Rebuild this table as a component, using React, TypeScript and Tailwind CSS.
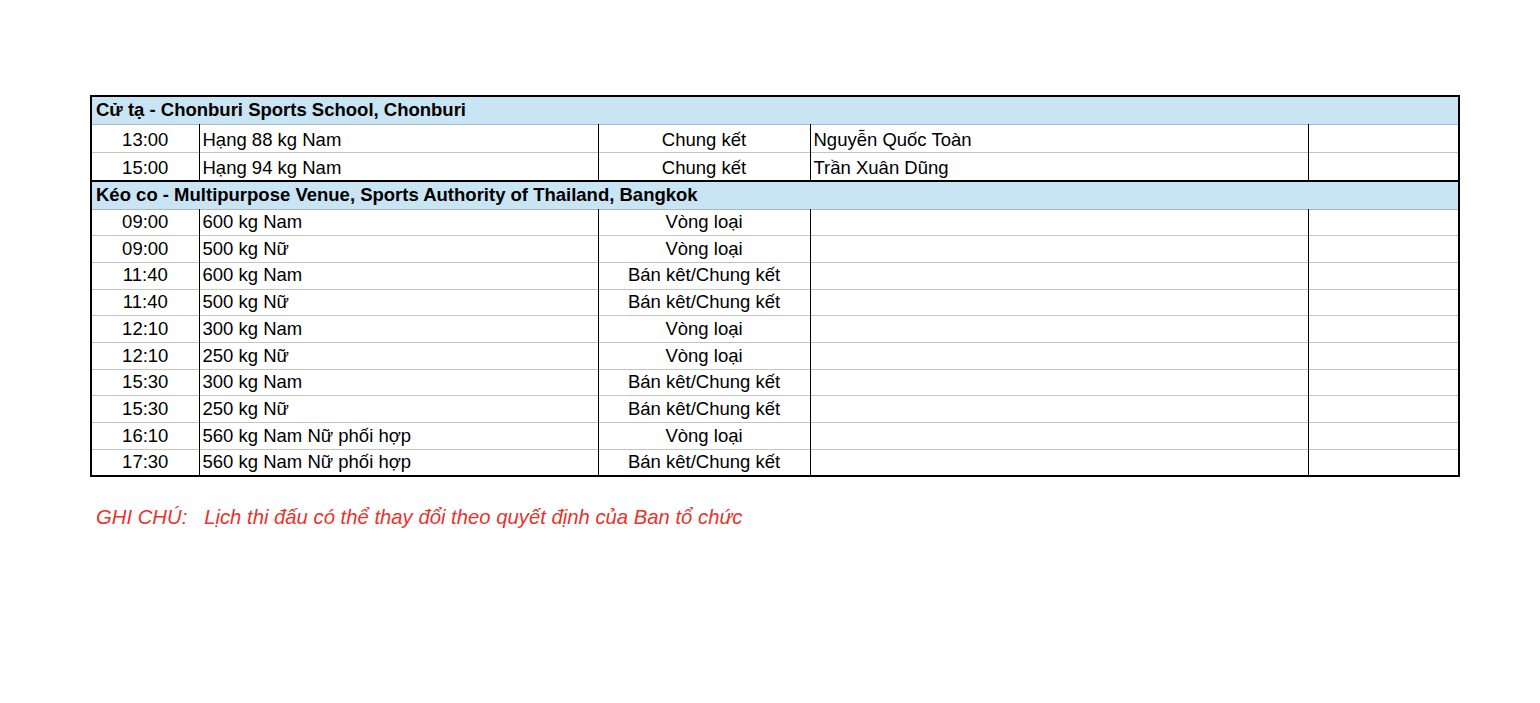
import React from 'react';

type Row = { time: string; event: string; stage: string; name?: string };
type Section = { title: string; rows: Row[] };

const sections: Section[] = [
  {
    title: 'Cử tạ - Chonburi Sports School, Chonburi',
    rows: [
      { time: '13:00', event: 'Hạng 88 kg Nam', stage: 'Chung kết', name: 'Nguyễn Quốc Toàn' },
      { time: '15:00', event: 'Hạng 94 kg Nam', stage: 'Chung kết', name: 'Trần Xuân Dũng' },
    ],
  },
  {
    title: 'Kéo co - Multipurpose Venue, Sports Authority of Thailand, Bangkok',
    rows: [
      { time: '09:00', event: '600 kg Nam', stage: 'Vòng loại' },
      { time: '09:00', event: '500 kg Nữ', stage: 'Vòng loại' },
      { time: '11:40', event: '600 kg Nam', stage: 'Bán kêt/Chung kết' },
      { time: '11:40', event: '500 kg Nữ', stage: 'Bán kêt/Chung kết' },
      { time: '12:10', event: '300 kg Nam', stage: 'Vòng loại' },
      { time: '12:10', event: '250 kg Nữ', stage: 'Vòng loại' },
      { time: '15:30', event: '300 kg Nam', stage: 'Bán kêt/Chung kết' },
      { time: '15:30', event: '250 kg Nữ', stage: 'Bán kêt/Chung kết' },
      { time: '16:10', event: '560 kg Nam Nữ phối hợp', stage: 'Vòng loại' },
      { time: '17:30', event: '560 kg Nam Nữ phối hợp', stage: 'Bán kêt/Chung kết' },
    ],
  },
];

export default function App() {
  return (
    <div className="w-[1540px] h-[703px] bg-white text-black" style={{ fontFamily: '"Liberation Sans", Arial, sans-serif' }}>
      <div className="pt-[95px] pl-[90px]">
        <table className="border-collapse border-2 border-black text-[18.5px] leading-none w-[1370px] table-fixed">
          <colgroup>
            <col className="w-[108px]" />
            <col className="w-[399px]" />
            <col className="w-[212px]" />
            <col className="w-[498px]" />
            <col className="w-[151px]" />
          </colgroup>
          <tbody>
            {sections.map((s, si) => (
              <React.Fragment key={si}>
                <tr className="h-[28px] bg-[#c9e4f3] border-t-2 border-black border-b border-b-[#a9b8c2]">
                  <td colSpan={5} className="px-[4px] font-bold whitespace-nowrap">{s.title}</td>
                </tr>
                {s.rows.map((r, ri) => (
                  <tr key={ri} className={`${si === 0 ? 'h-[28.5px] [&>td]:pt-[3px]' : 'h-[26.7px]'} border-b border-[#c4c4c4]`}>
                    <td className="text-center border-r border-black">{r.time}</td>
                    <td className="pl-[3px] border-r border-black whitespace-nowrap">{r.event}</td>
                    <td className="text-center border-r border-black whitespace-nowrap">{r.stage}</td>
                    <td className="pl-[3px] border-r border-black whitespace-nowrap">{r.name ?? ''}</td>
                    <td></td>
                  </tr>
                ))}
              </React.Fragment>
            ))}
          </tbody>
        </table>
        <p className="mt-[25px] pl-[6px] italic text-[20.3px] text-[#e8332b] whitespace-pre">
          {'GHI CHÚ:   Lịch thi đấu có thể thay đổi theo quyết định của Ban tổ chức'}
        </p>
      </div>
    </div>
  );
}
